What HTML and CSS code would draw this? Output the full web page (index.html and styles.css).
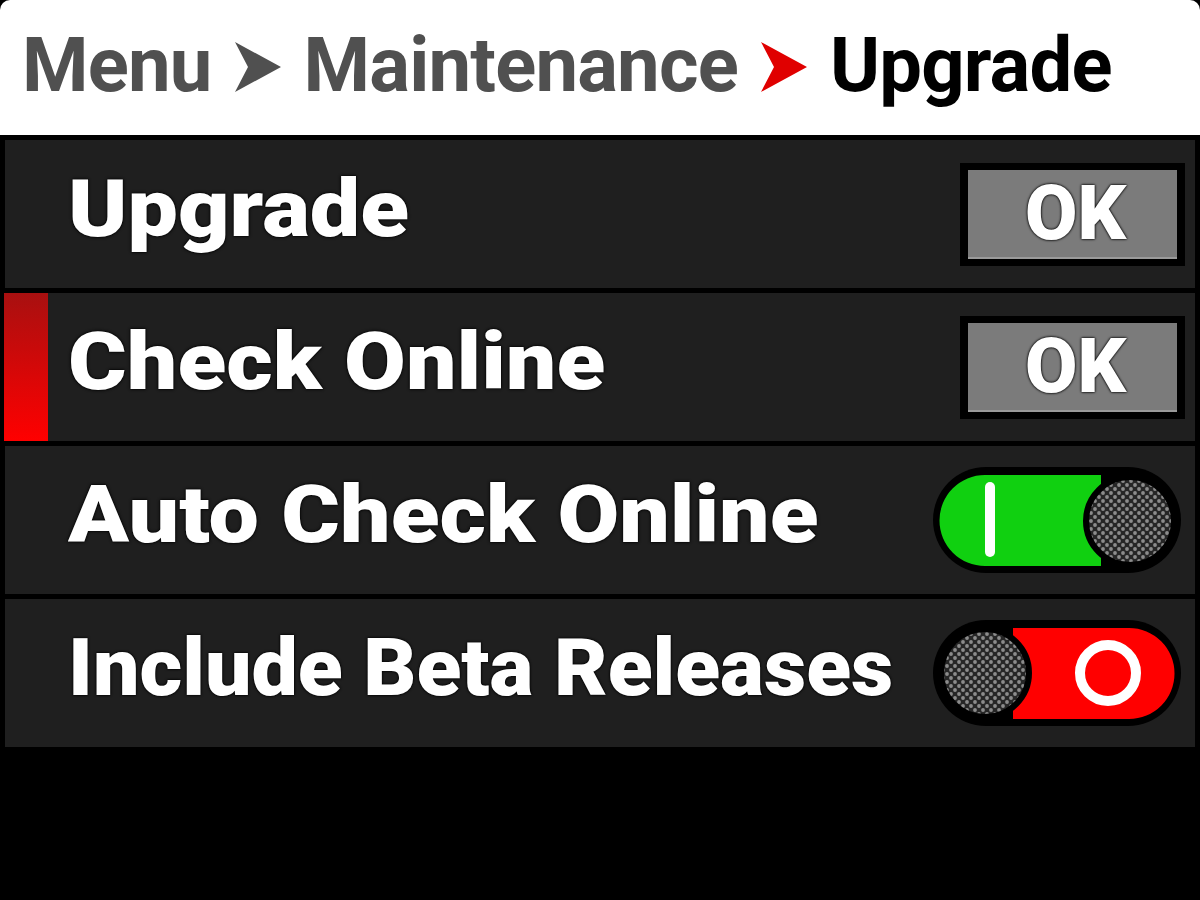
FILE: index.html
```html
<!DOCTYPE html>
<html lang="en">
<head>
    <meta charset="UTF-8">
    <title>Upgrade</title>
    <link rel="stylesheet" href="styles.css">
</head>
<body>
<div id="screen">
    <div id="crumbs">
        <span class="crumb">Menu</span>
        <svg class="sep" viewBox="0 0 46 50" width="46" height="50"><path d="M0 0 L46 25 L0 50 L13 25 Z" fill="#505050"/></svg>
        <span class="crumb">Maintenance</span>
        <svg class="sep" viewBox="0 0 46 50" width="46" height="50"><path d="M0 0 L46 25 L0 50 L13 25 Z" fill="#e00000"/></svg>
        <span class="crumb current">Upgrade</span>
    </div>
    <div id="list">
        <div class="row">
            <div class="label">Upgrade</div>
            <div class="okButton"><span>OK</span></div>
        </div>
        <div class="row active">
            <div class="label">Check Online</div>
            <div class="okButton"><span>OK</span></div>
        </div>
        <div class="row">
            <div class="label">Auto Check Online</div>
            <svg class="toggle" viewBox="0 0 250 106" width="250" height="106">
                <defs>
                    <pattern id="dotsOn" width="8" height="8" patternUnits="userSpaceOnUse">
                        <rect width="8" height="8" fill="#262626"/>
                        <circle cx="2" cy="2" r="1.9" fill="#8c8c8c"/>
                        <circle cx="6" cy="6" r="1.9" fill="#8c8c8c"/>
                    </pattern>
                </defs>
                <rect x="0" y="0" width="248" height="106" rx="53" fill="#000"/>
                <path d="M52 8 H168 V99 H52 A45.5 45.5 0 0 1 52 8 Z" fill="#10d010"/>
                <rect x="52" y="15" width="10" height="75" rx="5" fill="#fff"/>
                <circle cx="197" cy="54" r="44" fill="url(#dotsOn)" stroke="#000" stroke-width="6"/>
            </svg>
        </div>
        <div class="row">
            <div class="label long">Include Beta Releases</div>
            <svg class="toggle" viewBox="0 0 250 106" width="250" height="106">
                <defs>
                    <pattern id="dotsOff" width="8" height="8" patternUnits="userSpaceOnUse">
                        <rect width="8" height="8" fill="#262626"/>
                        <circle cx="2" cy="2" r="1.9" fill="#8c8c8c"/>
                        <circle cx="6" cy="6" r="1.9" fill="#8c8c8c"/>
                    </pattern>
                </defs>
                <rect x="0" y="0" width="248" height="106" rx="53" fill="#000"/>
                <path d="M80 8 H196 A45.5 45.5 0 0 1 196 99 H80 Z" fill="#ff0000"/>
                <circle cx="175" cy="53" r="28" fill="none" stroke="#fff" stroke-width="10"/>
                <circle cx="52" cy="53" r="44" fill="url(#dotsOff)" stroke="#000" stroke-width="6"/>
            </svg>
        </div>
    </div>
</div>
</body>
</html>
```

FILE: styles.css
```css
body {
    margin: 0;
    padding: 0;
    background-color: #000000;
    font-family: Roboto, 'Noto Sans', sans-serif;
    font-weight: bold;
}
#screen {
    width: 1200px;
    height: 900px;
    background-color: #000000;
}
#crumbs {
    height: 135px;
    background-color: #ffffff;
    border-radius: 10px 10px 0 0;
    display: flex;
    align-items: center;
    padding: 0 0 6px 22px;
    box-sizing: border-box;
    gap: 23px;
}
.crumb {
    font-size: 76px;
    color: #505050;
    letter-spacing: -0.8px;
    line-height: 1;
}
.crumb.current {
    color: #000000;
}
.sep {
    display: block;
    margin-top: 4px;
}
#list {
    padding: 5px 5px 0 5px;
    display: flex;
    flex-direction: column;
    gap: 5px;
}
.row {
    position: relative;
    height: 148px;
    background-color: #1f1f1f;
    display: flex;
    align-items: center;
    justify-content: space-between;
    padding: 0 10px 0 63px;
    box-sizing: border-box;
}
.row.active::before {
    content: '';
    position: absolute;
    left: -1px;
    top: 0;
    bottom: 0;
    width: 44px;
    background: linear-gradient(#a81010, #ff0000);
}
.label {
    font-size: 80px;
    font-weight: 900;
    color: #ffffff;
    text-shadow: 0 0 2px #000000, 0 0 3px #000000;
    padding-bottom: 10px;
    transform: scaleX(1.12);
    transform-origin: left center;
}
.label.long {
    transform: scaleX(1.03);
}
.okButton {
    width: 225px;
    height: 103px;
    box-sizing: border-box;
    background-color: #000000;
    padding: 7px 8px 7px 8px;
}
.okButton span {
    display: flex;
    height: 100%;
    align-items: center;
    justify-content: center;
    background-color: #7b7b7b;
    border-bottom: 2px solid #9a9a9a;
    box-sizing: border-box;
    color: #ffffff;
    font-size: 76px;
    font-weight: 900;
    text-shadow: 0 0 2px #000000, 0 0 3px #000000;
    padding-left: 6px;
}
.toggle {
    display: block;
    margin-right: 2px;
}
```
